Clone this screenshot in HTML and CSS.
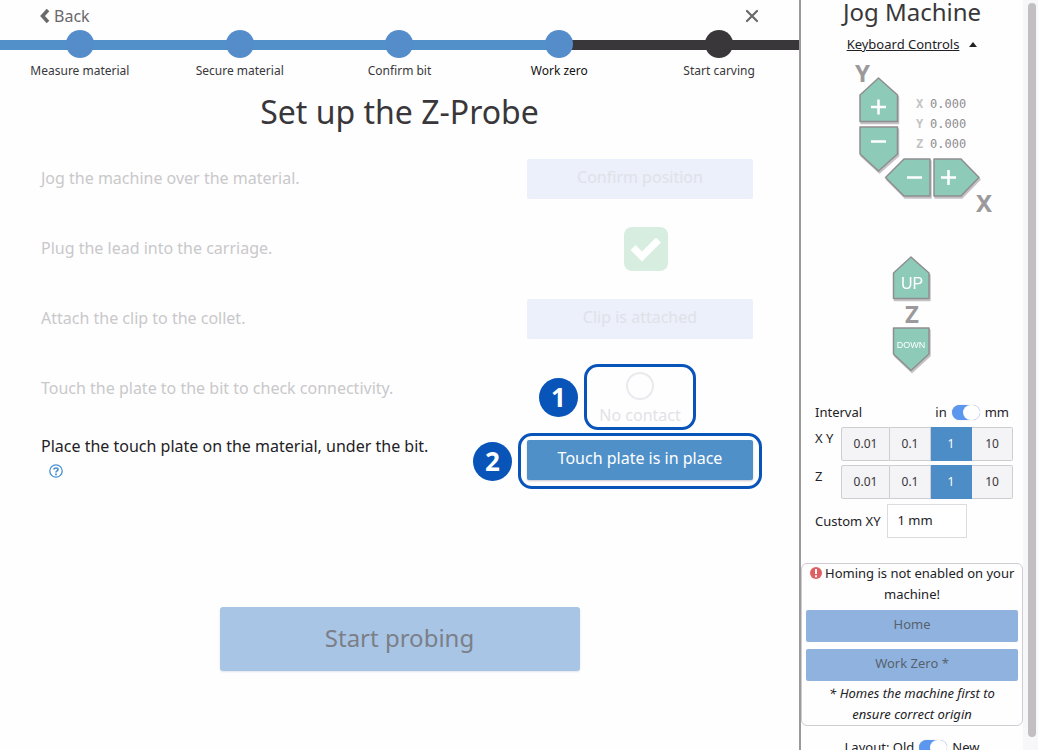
FILE: index.html
```html
<!DOCTYPE html>
<html lang="en">
<head>
    <meta charset="UTF-8">
    <meta name="viewport" content="width=device-width, initial-scale=1.0">
    <title>Set up the Z-Probe</title>
    <link rel="stylesheet" href="styles.css">
</head>
<body>
    <!-- Carve wizard -->
    <main class="wizard">
        <div class="wizard-nav">
            <a class="back" href="#">
                <svg width="10" height="16" viewBox="0 0 10 16"><path d="M8 2L2.500 8L8 14" fill="none" stroke="#6a686b" stroke-width="3.500"/></svg>Back
            </a>
            <button class="close" aria-label="Close">
                <svg width="14" height="14" viewBox="0 0 14 14"><path d="M2 2L12 12M12 2L2 12" stroke="#6a686b" stroke-width="2.200" stroke-linecap="round"/></svg>
            </button>
        </div>

        <ol class="steps">
            <li class="done"><div class="step-line"><span class="dot"></span></div>Measure material</li>
            <li class="done"><div class="step-line"><span class="dot"></span></div>Secure material</li>
            <li class="done"><div class="step-line"><span class="dot"></span></div>Confirm bit</li>
            <li class="current"><div class="step-line"><span class="dot"></span></div>Work zero</li>
            <li><div class="step-line"><span class="dot"></span></div>Start carving</li>
        </ol>

        <h1>Set up the Z-Probe</h1>

        <div class="tasks">
            <div class="task inactive">
                <p>Jog the machine over the material.</p>
                <div class="action"><button class="task-button" disabled>Confirm position</button></div>
            </div>
            <div class="task inactive">
                <p>Plug the lead into the carriage.</p>
                <div class="action">
                    <svg class="check" width="44" height="44" viewBox="0 0 44 44">
                        <rect width="44" height="44" rx="8" fill="#d7ede0"/>
                        <path d="M9 20.500L18 29.500L34.500 13" fill="none" stroke="#fff" stroke-width="7"/>
                    </svg>
                </div>
            </div>
            <div class="task inactive">
                <p>Attach the clip to the collet.</p>
                <div class="action"><button class="task-button" disabled>Clip is attached</button></div>
            </div>
            <div class="task inactive">
                <p>Touch the plate to the bit to check connectivity.</p>
                <div class="action contact">
                    <span class="contact-light"></span>
                    <span class="contact-text">No contact</span>
                    <div class="callout callout-contact"><span class="badge">1</span></div>
                </div>
            </div>
            <div class="task active">
                <p>Place the touch plate on the material, under the bit.
                    <a class="help" href="#" aria-label="Help"><svg width="14" height="14" viewBox="0 0 14 14"><circle cx="7" cy="7" r="6.200" fill="none" stroke="#4a90d0" stroke-width="1.300"/><path d="M5 5.500C5 3.500 9 3.500 9 5.500C9 7 7 6.800 7 8.500M7 9.600V11.200" fill="none" stroke="#4a90d0" stroke-width="1.700"/></svg></a>
                </p>
                <div class="action">
                    <button class="task-button">Touch plate is in place</button>
                    <div class="callout callout-place"><span class="badge">2</span></div>
                </div>
            </div>
        </div>

        <button class="start" disabled>Start probing</button>
    </main>

    <!-- Jog panel -->
    <aside class="panel">
        <div class="panel-content">
            <h2>Jog Machine</h2>
            <div class="keyboard"><a href="#">Keyboard Controls</a><svg width="8" height="5" viewBox="0 0 8 5"><path d="M0 5L4 0L8 5Z" fill="#222"/></svg></div>

            <div class="jog-xy">
                <div class="y-axis">
                    <span class="axis">Y</span>
                    <button class="jog" aria-label="Y plus">
                        <svg width="42" height="49" viewBox="0 0 42 49"><path class="arrow" d="M20.500 2L39.500 19V45.500H2V19Z"/><path class="sign" d="M13 31H28M20.500 23.500V38.500"/></svg>
                    </button>
                    <button class="jog" aria-label="Y minus">
                        <svg width="42" height="49" viewBox="0 0 42 49"><path class="arrow" d="M2 2H39.500V29L20.500 46L2 29Z"/><path class="sign" d="M13 16.500H28"/></svg>
                    </button>
                </div>
                <div class="x-side">
                    <dl class="readout">
                        <dt>X</dt><dd>0.000</dd>
                        <dt>Y</dt><dd>0.000</dd>
                        <dt>Z</dt><dd>0.000</dd>
                    </dl>
                    <div class="x-axis">
                        <button class="jog" aria-label="X minus">
                            <svg width="48" height="42" viewBox="0 0 48 42"><path class="arrow" d="M1.500 20.500L20 2H46V39H20Z"/><path class="sign" d="M23 20.500H38"/></svg>
                        </button>
                        <button class="jog" aria-label="X plus">
                            <svg width="50" height="42" viewBox="0 0 50 42"><path class="arrow" d="M2 2H29L47 20.500L29 39H2Z"/><path class="sign" d="M9 20.500H24M16.500 13V28"/></svg>
                        </button>
                    </div>
                    <span class="axis axis-x">X</span>
                </div>
            </div>

            <div class="jog-z">
                <button class="jog">
                    <svg width="40" height="47" viewBox="0 0 40 47"><path class="arrow" d="M19 2L37 18V43.500H1.500V18Z"/><text x="20" y="34" font-size="16">UP</text></svg>
                </button>
                <span class="axis">Z</span>
                <button class="jog">
                    <svg width="40" height="47" viewBox="0 0 40 47"><path class="arrow" d="M1.500 2H37V28L19 44.500L1.500 28Z"/><text x="19" y="22" font-size="9">DOWN</text></svg>
                </button>
            </div>

            <div class="settings">
                <div class="units">
                    <span>Interval</span>
                    <label>in <input type="checkbox" class="toggle" checked> mm</label>
                </div>
                <div class="interval">
                    <span>X Y</span>
                    <div class="choices">
                        <button>0.01</button><button>0.1</button><button class="selected">1</button><button>10</button>
                    </div>
                </div>
                <div class="interval">
                    <span>Z</span>
                    <div class="choices">
                        <button>0.01</button><button>0.1</button><button class="selected">1</button><button>10</button>
                    </div>
                </div>
                <div class="custom">
                    <label for="custom-xy">Custom XY</label>
                    <input type="text" id="custom-xy" value="1 mm">
                </div>
            </div>

            <div class="homing">
                <p><svg width="12" height="12" viewBox="0 0 12 12"><circle cx="6" cy="6" r="6" fill="#e05f63"/><path d="M6 2V7M6 8.300V10.200" stroke="#fff" stroke-width="2"/></svg> Homing is not enabled on your machine!</p>
                <button disabled>Home</button>
                <button disabled>Work Zero *</button>
                <p class="note">* Homes the machine first to ensure correct origin</p>
            </div>

            <div class="layout-switch">
                <label>Layout: Old <input type="checkbox" class="toggle" checked> New</label>
            </div>
        </div>
        <div class="scrollbar"><div class="thumb"></div></div>
    </aside>
</body>
</html>
```
FILE: styles.css
```css
* {
    box-sizing: border-box;
}

body {
    font-family: "Noto Sans", sans-serif;
    font-size: 16px;
    color: #232226;
    margin: 0;
    display: flex;
    height: 100vh;
    overflow: hidden;
    background: #fefefe;
}

button, input {
    font-family: inherit;
    margin: 0;
}

h1, h2, p, ol, dl, dd {
    margin: 0;
    padding: 0;
}

h1, h2 {
    font-weight: 400;
    color: #39373a;
    text-align: center;
}

/* Wizard */
.wizard {
    flex: 1;
    min-width: 0;
}

.wizard-nav {
    display: flex;
    justify-content: space-between;
    align-items: center;
    height: 30px;
    padding: 2px 40px 0;
}

.back {
    display: flex;
    align-items: center;
    gap: 4px;
    color: #6a686b;
    font-size: 16px;
    text-decoration: none;
}

.close {
    display: flex;
    padding: 0;
    border: none;
    background: none;
    cursor: pointer;
}

.steps {
    display: flex;
    list-style: none;
}

.steps li {
    flex: 1;
    font-size: 12px;
    line-height: 26px;
    text-align: center;
    color: #39373a;
}

.steps .current {
    color: #111;
}

.step-line {
    display: flex;
    justify-content: center;
    background: linear-gradient(#39373a, #39373a) 0 10px / 100% 10px no-repeat;
}

.done .step-line {
    background-image: linear-gradient(#5290c9, #5290c9);
}

.current .step-line {
    background-image: linear-gradient(90deg, #5290c9 50%, #39373a 50%);
}

.dot {
    width: 28px;
    height: 28px;
    border-radius: 50%;
    background: #39373a;
}

.done .dot, .current .dot {
    background: #558dcb;
}

h1 {
    font-size: 32px;
    line-height: 40px;
    margin: 8px 0 11px;
}

.tasks {
    padding: 0 39px 0 41px;
}

.task {
    display: grid;
    grid-template-columns: 1fr 240px;
    column-gap: 80px;
    height: 70px;
    line-height: 24px;
}

.task p {
    padding-top: 23px;
}

.inactive {
    color: #c9c8cb;
}

.action {
    position: relative;
    display: flex;
    align-items: center;
    justify-content: center;
    padding-top: 2px;
}

.check {
    margin-left: 12px;
}

.task-button {
    width: 226px;
    height: 40px;
    padding: 0 0 4px;
    border: none;
    border-radius: 2px;
    font-size: 16px;
    color: #fff;
    background: #5090c9;
    box-shadow: 0 1px 2px #c8c8d0;
    cursor: pointer;
}

.task-button:disabled {
    color: #e0e1e8;
    background: #ebf0fa;
    box-shadow: none;
    cursor: default;
}

.contact {
    flex-direction: column;
    justify-content: flex-start;
    padding-top: 19px;
}

.contact-light {
    width: 28px;
    height: 28px;
    flex: none;
    border: 2px solid #ebe9ee;
    border-radius: 50%;
}

.contact-text {
    margin-top: 3px;
    color: #e3e2e7;
}

.active {
    margin-top: 11px;
    height: 60px;
}

.active p {
    padding-top: 0;
}

.active .action {
    align-items: flex-start;
    padding-top: 6px;
}

.help {
    display: inline-block;
    margin-left: 8px;
    vertical-align: -2px;
    line-height: 14px;
}

/* Numbered callouts lie over the task they point at */
.callout {
    position: absolute;
    border: 3px solid #0854b8;
    border-radius: 14px;
}

.callout-contact {
    left: 64px;
    top: 11px;
    width: 112px;
    height: 66px;
}

.callout-place {
    left: -2px;
    right: -2px;
    top: -1px;
    height: 56px;
}

.badge {
    position: absolute;
    right: 100%;
    top: 50%;
    margin: -19px 9px 0 0;
    width: 39px;
    height: 39px;
    border-radius: 50%;
    font-size: 26px;
    font-weight: 700;
    line-height: 38px;
    text-align: center;
    color: #fff;
    background: #0854b8;
}

.start {
    display: block;
    width: 360px;
    height: 64px;
    margin: 113px auto 0;
    padding: 0 0 4px;
    border: none;
    border-radius: 3px;
    font-size: 24px;
    color: #7b7f86;
    background: #a9c5e6;
    box-shadow: 0 1px 2px #e0e4ee;
}

/* Jog panel */
.panel {
    display: flex;
    width: 239px;
    border-left: 2px solid #9b999c;
    font-size: 13px;
}

.panel-content {
    flex: 1;
    min-width: 0;
}

.scrollbar {
    width: 15px;
    padding: 3px 2px 13px 5px;
    background: #f7f6f9;
}

.thumb {
    height: 100%;
    border-radius: 4px;
    background: #c1bfc2;
}

h2 {
    font-size: 24px;
    line-height: 24px;
}

.keyboard {
    display: flex;
    justify-content: center;
    align-items: center;
    gap: 10px;
    height: 40px;
}

.keyboard a {
    color: #232226;
}

.jog {
    display: block;
    padding: 0;
    border: none;
    background: none;
    cursor: pointer;
}

.jog svg {
    display: block;
    filter: drop-shadow(1px 2px 0 #c4c2c5);
}

.jog text {
    font-family: "Liberation Sans", sans-serif;
    text-anchor: middle;
    fill: #fff;
}

.arrow {
    fill: #8dcab8;
    stroke: #8f8d90;
    stroke-width: 1.5px;
    stroke-linejoin: round;
}

.sign {
    stroke: #fff;
    stroke-width: 2.5px;
}

.axis {
    font-size: 24px;
    font-weight: 700;
    line-height: 24px;
    color: #9b999c;
}

.jog-xy {
    display: flex;
    margin: -3px 0 0 57px;
}

.y-axis .axis {
    display: block;
    height: 15px;
    margin-left: -3px;
}

.x-side {
    width: 98px;
    margin-left: -16px;
    padding-top: 33px;
}

.readout {
    display: grid;
    grid-template-columns: 14px auto;
    margin-left: 32px;
    font-family: "DejaVu Sans Mono", monospace;
    font-size: 12px;
    line-height: 20px;
    color: #8f8d90;
}

.readout dt {
    font-weight: 700;
    color: #c4c2c5;
}

.x-axis {
    display: flex;
    margin-top: 3px;
}

.axis-x {
    display: block;
    margin-top: -8px;
    text-align: right;
    margin-right: -10px;
}

.jog-z {
    display: flex;
    flex-direction: column;
    align-items: center;
    margin-top: 40px;
}

.settings {
    padding: 29px 10px 0 14px;
}

.units {
    display: flex;
    justify-content: space-between;
    padding-right: 4px;
    line-height: 20px;
    margin-bottom: 5px;
}

.units label, .layout-switch label {
    display: flex;
    align-items: center;
    gap: 5px;
}

.toggle {
    appearance: none;
    width: 28px;
    height: 15px;
    border-radius: 8px;
    background: #5b97ee;
    box-shadow: 0 0 1px #aaa;
}

.toggle::before {
    content: "";
    display: block;
    width: 17px;
    height: 15px;
    margin-left: 11px;
    border-radius: 8px;
    background: #fff;
}

.interval {
    display: flex;
    justify-content: space-between;
    margin-bottom: 4px;
    line-height: 22px;
}

.choices {
    display: flex;
    width: 172px;
}

.choices button {
    flex: 1;
    height: 34px;
    padding: 0 0 2px;
    border: 1px solid #cfcdd1;
    border-left: none;
    font-size: 12px;
    color: #39373a;
    background: #f4f3f5;
    cursor: pointer;
}

.choices button:first-child {
    flex: none;
    width: 49px;
    border-left: 1px solid #cfcdd1;
    border-radius: 2px 0 0 2px;
}

.choices button:last-child {
    border-radius: 0 2px 2px 0;
}

.choices .selected {
    color: #fff;
    background: #4c8cc7;
    border-color: #4c8cc7;
}

.custom {
    display: flex;
    align-items: center;
    gap: 6px;
    margin-top: 5px;
}

.custom input {
    width: 80px;
    height: 34px;
    padding: 0 10px 3px;
    border: 1px solid #dddbe0;
    font-size: 13px;
    color: #232226;
    background: #fff;
}

.homing {
    margin-top: 25px;
    padding: 0 4px;
    border: 1px solid #cfcdd1;
    border-radius: 6px;
    text-align: center;
    line-height: 21px;
}

.homing p {
    margin: -1px -4px 0;
}

.homing svg {
    vertical-align: -1px;
}

.homing button {
    display: block;
    width: 100%;
    height: 32px;
    margin: 5px 0 7px;
    padding: 0 0 5px;
    border: none;
    border-radius: 2px;
    font-size: 13px;
    color: #57616d;
    background: #8fb3de;
}

.homing .note {
    margin: -5px 0 0;
    padding: 0 12px;
    font-style: italic;
}

.layout-switch {
    display: flex;
    justify-content: center;
    margin-top: 12px;
    line-height: 18px;
}
```
